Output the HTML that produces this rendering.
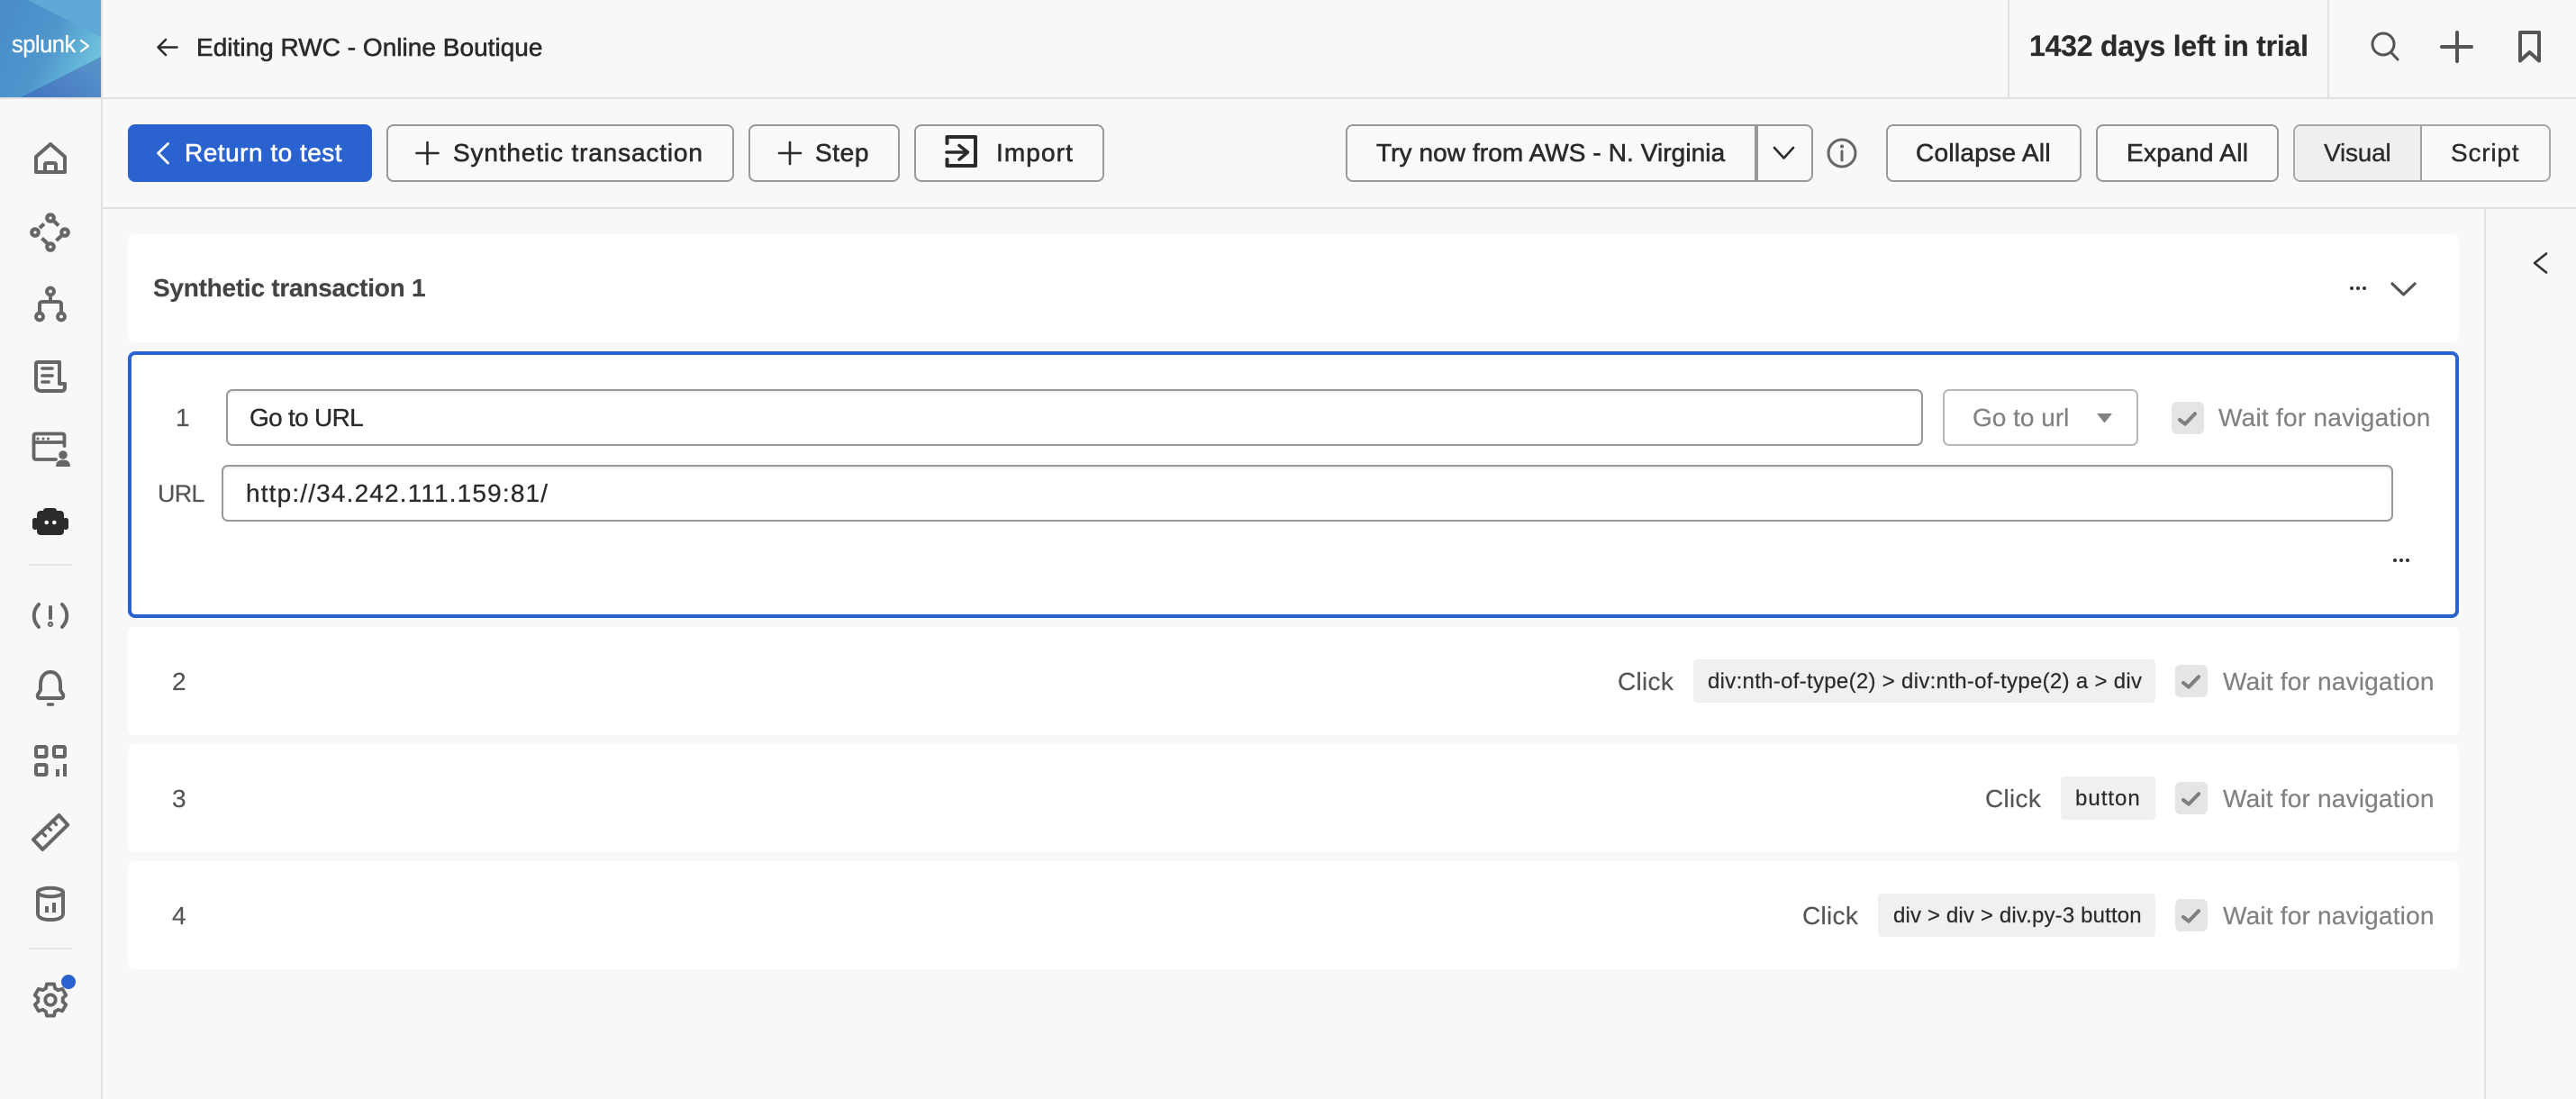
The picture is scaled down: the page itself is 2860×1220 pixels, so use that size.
<!DOCTYPE html>
<html lang="en">
<head>
<meta charset="utf-8">
<title>Editing RWC - Online Boutique</title>
<style>
*{box-sizing:border-box}
html,body{margin:0;padding:0;width:2860px;height:1220px;overflow:hidden;background:#f8f8f8}
body{position:relative;font-family:"Liberation Sans",sans-serif;color:#2b2b2b}
.b{position:absolute}
.line{position:absolute;background:#e0e0e0}
.btn{position:absolute;top:138px;height:64px;border:2px solid #999;border-radius:8px;background:#f9f9f9}
.primary{background:#2a62d0;border-color:#2a62d0}
.card{position:absolute;left:142px;width:2588px;background:#fff;border-radius:8px}
.active{border:4px solid #2a62d0}
.inp{position:absolute;height:63px;background:#fff;border:2px solid #999;border-radius:7px;box-shadow:inset 0 2px 2px #f0f0f0}
.sel{position:absolute;height:63px;background:#fff;border:2px solid #b8b8b8;border-radius:7px}
.chip{position:absolute;height:48px;background:#f0f0f0;border-radius:4px}
.cb{position:absolute;width:36px;height:36px;background:#e5e5e5;border-radius:6px}
.t{position:absolute;white-space:nowrap;height:40px;line-height:40px;font-size:28px;-webkit-text-stroke:.2px currentColor}
.m{-webkit-text-stroke:.6px currentColor}
.gray{color:#818181}
.mid{color:#555}
.chipt{font-size:24px;color:#2b2b2b}
svg{position:absolute;left:0;top:0}
</style>
</head>
<body>

<div class="line" style="left:0;top:108px;width:2860px;height:2px"></div>
<div class="line" style="left:112px;top:0;width:2px;height:1220px"></div>
<div class="line" style="left:114px;top:230px;width:2746px;height:2px"></div>
<div class="line" style="left:2229px;top:0;width:2px;height:108px"></div>
<div class="line" style="left:2584px;top:0;width:2px;height:108px"></div>
<div class="line" style="left:2758px;top:232px;width:2px;height:988px"></div>
<div class="line" style="left:32px;top:626px;width:48px;height:2px;background:#e6e6e6"></div>
<div class="line" style="left:32px;top:1052px;width:48px;height:2px;background:#e6e6e6"></div>

<div class="t m" style="left:218px;top:33px;letter-spacing:.02px">Editing RWC - Online Boutique</div>
<div class="t" style="left:2253px;top:31px;font-size:32px;font-weight:bold;letter-spacing:-.22px">1432 days left in trial</div>

<div class="btn primary" style="left:142px;width:271px"></div>
<div class="t m" style="left:205px;top:150px;color:#fff;letter-spacing:.5px">Return to test</div>

<div class="btn" style="left:429px;width:386px"></div>
<div class="t m" style="left:503px;top:150px;letter-spacing:.85px">Synthetic transaction</div>

<div class="btn" style="left:831px;width:168px"></div>
<div class="t m" style="left:905px;top:150px;letter-spacing:.6px">Step</div>

<div class="btn" style="left:1015px;width:211px"></div>
<div class="t m" style="left:1106px;top:150px;letter-spacing:1.1px">Import</div>

<div class="btn" style="left:1494px;width:519px"></div>
<div class="b" style="left:1948px;top:138px;width:4px;height:64px;background:#999"></div>
<div class="t m" style="left:1528px;top:150px;letter-spacing:.08px">Try now from AWS - N. Virginia</div>

<div class="btn" style="left:2094px;width:217px"></div>
<div class="t m" style="left:2127px;top:150px;letter-spacing:.3px">Collapse All</div>

<div class="btn" style="left:2327px;width:203px"></div>
<div class="t m" style="left:2361px;top:150px;letter-spacing:.3px">Expand All</div>

<div class="btn" style="left:2546px;width:286px;border-color:#a8a8a8"></div>
<div class="b" style="left:2548px;top:140px;width:139px;height:60px;background:#efefef;border-radius:6px 0 0 6px"></div>
<div class="b" style="left:2687px;top:140px;width:2px;height:60px;background:#a0a0a0"></div>
<div class="t" style="left:2580px;top:150px;letter-spacing:-.2px;-webkit-text-stroke:.35px currentColor">Visual</div>
<div class="t" style="left:2721px;top:150px;letter-spacing:.8px;-webkit-text-stroke:.35px currentColor">Script</div>

<div class="card" style="top:260px;height:120px"></div>
<div class="t mid" style="left:170px;top:300px;font-weight:bold;letter-spacing:-.25px;color:#444">Synthetic transaction 1</div>

<div class="card active" style="top:390px;height:296px"></div>
<div class="t mid" style="left:195px;top:444px">1</div>
<div class="inp" style="left:251px;top:432px;width:1884px"></div>
<div class="t" style="left:277px;top:444px;letter-spacing:-.7px;-webkit-text-stroke:.3px currentColor">Go to URL</div>
<div class="sel" style="left:2157px;top:432px;width:217px"></div>
<div class="t gray" style="left:2190px;top:444px">Go to url</div>
<div class="cb" style="left:2411px;top:446px"></div>
<div class="t gray" style="left:2463px;top:444px;letter-spacing:.25px">Wait for navigation</div>

<div class="t mid" style="left:175px;top:528px;font-size:27px;letter-spacing:-.8px">URL</div>
<div class="inp" style="left:246px;top:516px;width:2411px"></div>
<div class="t" style="left:273px;top:528px;letter-spacing:1.16px;-webkit-text-stroke:.3px currentColor">http://34.242.111.159:81/</div>

<div class="card" style="top:696px;height:120px"></div>
<div class="t mid" style="left:191px;top:737px">2</div>
<div class="t mid" style="left:1796px;top:737px;letter-spacing:.3px">Click</div>
<div class="chip" style="left:1880px;top:732px;width:513px"></div>
<div class="t chipt" style="left:1896px;top:737px;letter-spacing:.3px">div:nth-of-type(2) &gt; div:nth-of-type(2) a &gt; div</div>
<div class="cb" style="left:2415px;top:738px"></div>
<div class="t gray" style="left:2468px;top:737px;letter-spacing:.2px">Wait for navigation</div>

<div class="card" style="top:826px;height:120px"></div>
<div class="t mid" style="left:191px;top:867px">3</div>
<div class="t mid" style="left:2204px;top:867px;letter-spacing:.3px">Click</div>
<div class="chip" style="left:2288px;top:862px;width:105px"></div>
<div class="t chipt" style="left:2304px;top:867px;letter-spacing:1px">button</div>
<div class="cb" style="left:2415px;top:868px"></div>
<div class="t gray" style="left:2468px;top:867px;letter-spacing:.2px">Wait for navigation</div>

<div class="card" style="top:956px;height:120px"></div>
<div class="t mid" style="left:191px;top:997px">4</div>
<div class="t mid" style="left:2001px;top:997px;letter-spacing:.3px">Click</div>
<div class="chip" style="left:2085px;top:992px;width:308px"></div>
<div class="t chipt" style="left:2102px;top:997px;letter-spacing:.15px">div &gt; div &gt; div.py-3 button</div>
<div class="cb" style="left:2415px;top:998px"></div>
<div class="t gray" style="left:2468px;top:997px;letter-spacing:.2px">Wait for navigation</div>

<svg width="2860" height="1220" viewBox="0 0 2860 1220" xmlns="http://www.w3.org/2000/svg" fill="none" stroke-linecap="round" stroke-linejoin="round">
  <defs>
    <linearGradient id="lgMid" x1="0" y1="0.1" x2="1" y2="0.55">
      <stop offset="0" stop-color="#488cc8"/>
      <stop offset=".55" stop-color="#4f97cd"/>
      <stop offset="1" stop-color="#6fc3dd"/>
    </linearGradient>
    <linearGradient id="lgLow" x1="0.1" y1="1" x2="1" y2="0.4">
      <stop offset="0" stop-color="#4375c0"/>
      <stop offset="1" stop-color="#5690c9"/>
    </linearGradient>
  </defs>

  <!-- logo -->
  <rect x="0" y="0" width="112" height="108" fill="url(#lgMid)"/>
  <polygon points="31,0 112,0 112,41" fill="#5ea9d5"/>
  <polygon points="23,108 112,63 112,108" fill="url(#lgLow)"/>
  <text x="13" y="58" font-family="Liberation Sans, sans-serif" font-size="25.5" fill="#fff" letter-spacing="-.5" stroke="#fff" stroke-width=".3">splunk</text>
  <path d="M90 45 L98 51 L90 57" stroke="#fff" stroke-width="2.2"/>

  <!-- sidebar upper -->
  <g stroke="#666" stroke-width="4">
    <path d="M40 191 V174 L56 160 L72 174 V191 Z"/>
    <path d="M50 191 V183 Q50 181 52 181 H60 Q62 181 62 183 V191"/>
  </g>
  <g stroke="#666" stroke-width="4.2" fill="#f8f8f8">
    <circle cx="56" cy="242" r="3.7"/><circle cx="39" cy="258" r="3.7"/>
    <circle cx="72" cy="258" r="3.7"/><circle cx="56" cy="274" r="3.7"/>
  </g>
  <g stroke="#666" stroke-width="4.2" stroke-linecap="butt">
    <path d="M44 253 L49 248.5 M60 245.5 L65 250.5 M62.5 267 L68 262 M46.5 264.5 L52.5 270"/>
  </g>
  <g stroke="#666" stroke-width="4">
    <path d="M56 329 V335 M44 347 V338 Q44 335 47 335 H65 Q68 335 68 338 V347"/>
    <g fill="#f8f8f8"><circle cx="56" cy="323.5" r="3.9"/><circle cx="44" cy="351.5" r="3.9"/><circle cx="68" cy="351.5" r="3.9"/></g>
  </g>
  <g stroke="#666" stroke-width="4">
    <path d="M66 426 V402 H42 Q40 402 40 404 V428 Q40 434 46 434 H68 Q72 434 72 430 V426 H66"/>
    <path d="M47 409 H58 M47 417 H58 M47 424 H54" stroke-width="3.6"/>
  </g>
  <g stroke="#666" stroke-width="3.8">
    <path d="M62 510 H40 Q37.5 510 37.5 507 V484 Q37.5 481.5 40 481.5 H69 Q71.5 481.5 71.5 484 V495"/>
    <path d="M38 491 H71"/>
  </g>
  <g fill="#666">
    <circle cx="42" cy="487" r="1.5"/><circle cx="48" cy="487" r="1.5"/><circle cx="53.5" cy="487" r="1.5"/>
    <circle cx="70" cy="505" r="4.8"/>
    <path d="M62 518 Q62 510.5 70 510.5 Q78 510.5 78 518 Z"/>
  </g>
  <g fill="#2b2b2b">
    <rect x="41" y="567" width="30" height="27" rx="4"/>
    <rect x="48" y="564" width="15" height="8" rx="3"/>
    <rect x="36" y="575" width="6" height="13" rx="2.5"/>
    <rect x="70" y="575" width="6" height="13" rx="2.5"/>
    <circle cx="51.7" cy="580" r="2.3" fill="#f8f8f8"/>
    <circle cx="60.3" cy="580" r="2.3" fill="#f8f8f8"/>
  </g>

  <!-- sidebar lower -->
  <g stroke="#666" stroke-width="4">
    <path d="M43 671 C36 678 36 689 43 696 M69 671 C76 678 76 689 69 696 M56 674 V686"/>
    <circle cx="56" cy="693" r="1.1"/>
  </g>
  <g stroke="#666" stroke-width="4">
    <path d="M56 746 C49 746 45 752 45 760 V766 L42 771 Q41 775 44 775 H68 Q71 775 70 771 L67 766 V760 C67 752 63 746 56 746 Z"/>
    <path d="M53.5 782 H58.5" stroke-width="3.4"/>
  </g>
  <g stroke="#666" stroke-width="4">
    <rect x="40" y="829" width="11.5" height="11" rx="1.5"/>
    <rect x="60" y="829" width="12" height="11" rx="1.5"/>
    <rect x="40" y="849" width="11.5" height="11" rx="1.5"/>
  </g>
  <g fill="#666">
    <rect x="62" y="854" width="4" height="8"/>
    <rect x="70" y="848" width="4" height="14"/>
  </g>
  <g stroke="#666" stroke-width="4">
    <path d="M65.5 905 L75.2 915.7 L47.3 943 L37 932 Z"/>
    <path d="M46 923.5 L50.5 928 M52 917 L56.5 921.5 M58.3 911 L62.5 915.5" stroke-width="3.2"/>
  </g>
  <g stroke="#666" stroke-width="4">
    <ellipse cx="56" cy="990.5" rx="14" ry="4.8"/>
    <path d="M42 990.5 V1014 C42 1019 48 1021 56 1021 C64 1021 70 1019 70 1014 V990.5"/>
  </g>
  <g fill="#666">
    <rect x="50" y="1006" width="4" height="7"/>
    <rect x="58" y="1002" width="4" height="11"/>
  </g>
  <g stroke="#666" stroke-width="3.6" transform="translate(56 1110) scale(1.06)">
    <circle r="5.4"/>
    <path d="M-4.87 -12.05 L-3.82 -16.56 L3.82 -16.56 L4.87 -12.05 A13 13 0 0 1 8 -10.24"/>
    <path transform="rotate(60)" d="M-4.87 -12.05 L-3.82 -16.56 L3.82 -16.56 L4.87 -12.05 A13 13 0 0 1 8 -10.24"/>
    <path transform="rotate(120)" d="M-4.87 -12.05 L-3.82 -16.56 L3.82 -16.56 L4.87 -12.05 A13 13 0 0 1 8 -10.24"/>
    <path transform="rotate(180)" d="M-4.87 -12.05 L-3.82 -16.56 L3.82 -16.56 L4.87 -12.05 A13 13 0 0 1 8 -10.24"/>
    <path transform="rotate(240)" d="M-4.87 -12.05 L-3.82 -16.56 L3.82 -16.56 L4.87 -12.05 A13 13 0 0 1 8 -10.24"/>
    <path transform="rotate(300)" d="M-4.87 -12.05 L-3.82 -16.56 L3.82 -16.56 L4.87 -12.05 A13 13 0 0 1 8 -10.24"/>
  </g>
  <circle cx="76" cy="1090" r="8" fill="#2a62d0"/>

  <!-- header icons -->
  <path d="M196.5 52.5 H176 M184 44 L175.5 52.5 L184 61" stroke="#2b2b2b" stroke-width="2.5"/>
  <circle cx="2646" cy="49" r="12" stroke="#555" stroke-width="3"/>
  <path d="M2654.5 58 L2662 66" stroke="#555" stroke-width="3"/>
  <path d="M2728 36 V68 M2711 52 H2744" stroke="#555" stroke-width="4"/>
  <path d="M2798 36 H2819 V67.5 L2808.5 58 L2798 67.5 Z" stroke="#555" stroke-width="4"/>

  <!-- toolbar icons -->
  <path d="M186.5 159.5 L175.5 170 L186.5 181" stroke="#fff" stroke-width="2.8"/>
  <path d="M474.5 158 V182 M462.5 170 H486.5" stroke="#2b2b2b" stroke-width="2.6"/>
  <path d="M877 158 V182 M865 170 H889" stroke="#2b2b2b" stroke-width="2.6"/>
  <path d="M1051.5 159 V152 H1083 V184 H1051.5 V177" stroke="#2b2b2b" stroke-width="4"/>
  <path d="M1051 169 H1074 M1065 161.5 L1074.5 169 L1065 177" stroke="#2b2b2b" stroke-width="3.5"/>
  <path d="M1970 164 L1980.5 175.5 L1991 164" stroke="#2b2b2b" stroke-width="2.6"/>
  <circle cx="2045" cy="170" r="15" stroke="#666" stroke-width="3"/>
  <path d="M2045 168 V178" stroke="#666" stroke-width="3"/>
  <circle cx="2045" cy="162.5" r="2" fill="#666"/>

  <!-- card icons -->
  <path d="M2827 281.5 L2814 292 L2827 302.5" stroke="#333" stroke-width="2.6"/>
  <g fill="#333">
    <circle cx="2611" cy="320" r="2"/><circle cx="2618" cy="320" r="2"/><circle cx="2625" cy="320" r="2"/>
    <circle cx="2659" cy="622" r="2"/><circle cx="2666" cy="622" r="2"/><circle cx="2673" cy="622" r="2"/>
  </g>
  <path d="M2656 315 L2668.5 327 L2681 315" stroke="#555" stroke-width="3.2"/>
  <polygon points="2328,459 2345,459 2336.5,469.5" fill="#818181"/>
  <path d="M2420 466 L2426 470.7 L2437 459.3" stroke="#7f7f7f" stroke-width="4"/>
  <path d="M2424 758 L2430 762.7 L2441 751.3" stroke="#7f7f7f" stroke-width="4"/>
  <path d="M2424 888 L2430 892.7 L2441 881.3" stroke="#7f7f7f" stroke-width="4"/>
  <path d="M2424 1018 L2430 1022.7 L2441 1011.3" stroke="#7f7f7f" stroke-width="4"/>
</svg>

</body>
</html>
